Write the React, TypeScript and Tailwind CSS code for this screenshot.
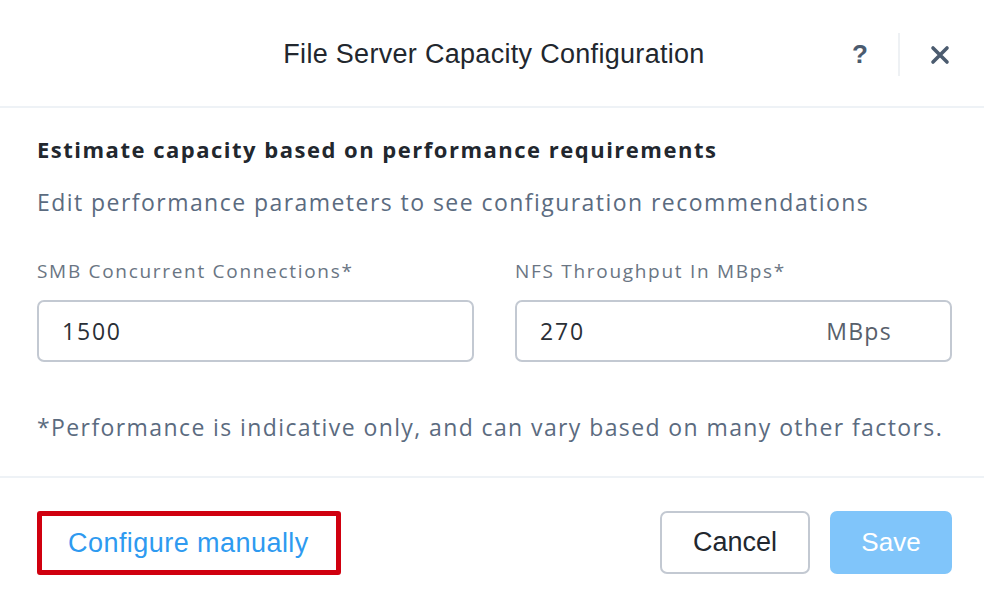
import React from "react";

const arial = { fontFamily: "'Liberation Sans', Arial, sans-serif" };

export default function App() {
  return (
    <div className="w-[984px] h-[600px] bg-white flex flex-col overflow-hidden" style={{ fontFamily: "'Open Sans', Lato, sans-serif" }}>
      {/* Header */}
      <div className="h-[108px] shrink-0 border-b-2 border-[#eef2f6] flex items-center relative">
        <div className="flex-1 text-center text-[27px] text-[#22272e] tracking-[0.3px] pl-[4px] pt-[2px]" style={arial}>
          File Server Capacity Configuration
        </div>
        <div className="absolute right-0 top-[33px] h-[43px] flex items-center">
          <span className="text-[26px] font-bold text-[#4b5b6f] w-[40px] text-center" style={arial}>?</span>
          <div className="w-[2px] h-[43px] bg-[#eef1f4] ml-[18px] mr-[30px]" />
          <svg width="20" height="20" viewBox="0 0 20 20" className="mr-[34px]">
            <path d="M3 3 L17 17 M17 3 L3 17" stroke="#4b5b6f" strokeWidth="3.6" strokeLinecap="round" />
          </svg>
        </div>
      </div>

      {/* Body */}
      <div className="pl-[37px] pr-[32px] pt-[26px] flex flex-col h-[370px] shrink-0 border-b-2 border-[#eef2f6]">
        <div className="text-[22px] font-bold text-[#22272e] leading-[30px] tracking-[1.5px] whitespace-nowrap">Estimate capacity based on performance requirements</div>
        <div className="text-[23px] text-[#5b6b7f] leading-[30px] mt-[23px] tracking-[1.45px] whitespace-nowrap">Edit performance parameters to see configuration recommendations</div>
        <div className="grid grid-cols-2 gap-[41px] mt-[42px]">
          <div className="flex flex-col">
            <div className="text-[19px] text-[#6a7583] leading-[24px] tracking-[1.7px] whitespace-nowrap">SMB Concurrent Connections*</div>
            <div className="mt-[17px] h-[62px] border-2 border-[#c3c9d2] rounded-[7px] flex items-center px-[23px] text-[23px] text-[#2a2f36] tracking-[1.8px]">1500</div>
          </div>
          <div className="flex flex-col">
            <div className="text-[19px] text-[#6a7583] leading-[24px] tracking-[1.7px] whitespace-nowrap">NFS Throughput In MBps*</div>
            <div className="mt-[17px] h-[62px] border-2 border-[#c3c9d2] rounded-[7px] flex items-center pl-[23px] pr-[58px] text-[23px] text-[#2a2f36] tracking-[1.8px]">
              <span className="flex-1">270</span>
              <span className="text-[#58606b] tracking-[1.3px]">MBps</span>
            </div>
          </div>
        </div>
        <div className="text-[23px] text-[#5b6b7f] leading-[30px] mt-[50px] tracking-[1.4px] whitespace-nowrap">*Performance is indicative only, and can vary based on many other factors.</div>
      </div>

      {/* Footer */}
      <div className="flex items-start pl-[37px] pr-[32px] pt-[33px]">
        <div className="w-[304px] h-[64px] border-[5px] border-[#d0000f] rounded-[3px] flex items-center pl-[26px]">
          <span className="text-[27px] text-[#2e9af0] tracking-[0.45px]" style={arial}>Configure manually</span>
        </div>
        <div className="flex-1" />
        <div className="w-[150px] h-[63px] border-2 border-[#c3c9d2] rounded-[7px] flex items-center justify-center text-[27px] text-[#22272e]" style={arial}>Cancel</div>
        <div className="w-[122px] h-[63px] ml-[20px] bg-[#80c5fa] rounded-[7px] flex items-center justify-center text-[26px] text-white" style={arial}>Save</div>
      </div>
    </div>
  );
}
